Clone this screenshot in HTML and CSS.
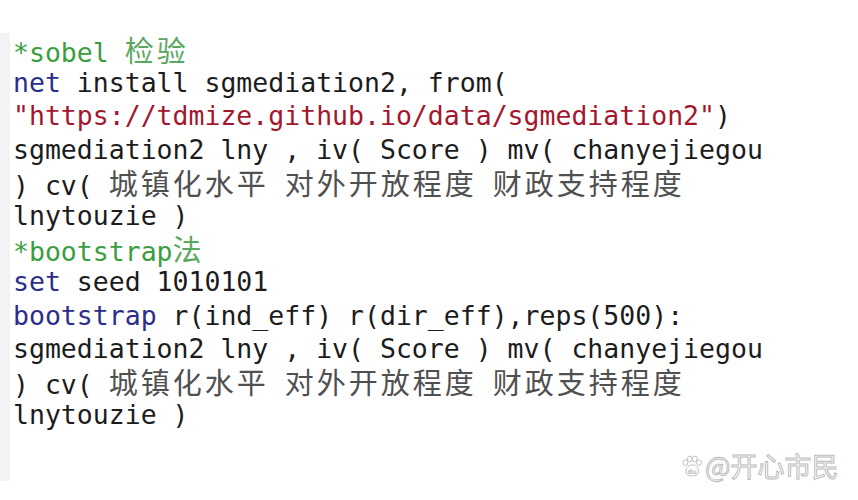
FILE: index.html
```html
<!DOCTYPE html>
<html lang="zh">
<head>
<meta charset="utf-8">
<link rel="stylesheet" href="styles.css">
</head>
<body>
<div class="page">
  <div class="editor">
    <div class="gutter"></div>
    <div class="code">
      <div class="line"><span class="cm">*sobel <span class="zh">检验</span></span></div>
      <div class="line"><span class="kw">net</span> install sgmediation2, from(</div>
      <div class="line"><span class="str">"https://tdmize.github.io/data/sgmediation2"</span>)</div>
      <div class="line">sgmediation2 lny , iv( Score ) mv( chanyejiegou</div>
      <div class="line">) cv( <span class="zh">城镇化水平</span> <span class="zh">对外开放程度</span> <span class="zh">财政支持程度</span></div>
      <div class="line">lnytouzie )</div>
      <div class="line"><span class="cm">*bootstrap<span class="zh">法</span></span></div>
      <div class="line"><span class="kw">set</span> seed 1010101</div>
      <div class="line"><span class="kw">bootstrap</span> r(ind_eff) r(dir_eff),reps(500):</div>
      <div class="line">sgmediation2 lny , iv( Score ) mv( chanyejiegou</div>
      <div class="line">) cv( <span class="zh">城镇化水平</span> <span class="zh">对外开放程度</span> <span class="zh">财政支持程度</span></div>
      <div class="line">lnytouzie )</div>
    </div>
  </div>
  <div class="watermark">
    <svg class="paw" viewBox="0 0 20 20" width="22" height="22">
      <g fill="#fff" stroke="#bdbdbd" stroke-width="0.9">
        <ellipse cx="4" cy="7" rx="2.2" ry="2.6"/>
        <ellipse cx="8" cy="3.6" rx="2.2" ry="2.6"/>
        <ellipse cx="12.6" cy="3.6" rx="2.2" ry="2.6"/>
        <ellipse cx="16.4" cy="7" rx="2.2" ry="2.6"/>
        <path d="M4.5 15.5 C4.5 11 7.5 9 10.2 9 C13 9 16 11 16 15.5 C16 18 14 19 10.2 19 C6.5 19 4.5 18 4.5 15.5 Z"/>
      </g>
      <text x="10.2" y="17" text-anchor="middle" class="du">du</text>
    </svg>
    <span class="wm-text">@开心市民</span>
  </div>
</div>
</body>
</html>
```
FILE: styles.css
```css
html, body {
  margin: 0;
  padding: 0;
  background: #ffffff;
}

.page {
  position: relative;
  width: 858px;
  height: 500px;
  overflow: hidden;
  background: #ffffff;
}

.editor {
  display: flex;
  padding-top: 33px;
}

.gutter {
  width: 10px;
  height: 448px;
  background: #f3f3f5;
  flex: none;
}

.code {
  padding-left: 3px;
  font-family: "DejaVu Sans Mono", "Liberation Mono", monospace;
  font-size: 26.5px;
  line-height: 33.2px;
  color: #1c1c1c;
}

.line {
  white-space: pre;
  height: 33.2px;
}

.cm {
  color: #3a9e3f;
}

.kw {
  color: #2b2d8c;
}

.str {
  color: #a3172e;
}

.zh {
  font-family: "Noto Sans CJK SC", sans-serif;
  font-size: 29px;
  line-height: 33.2px;
  letter-spacing: 3px;
  color: #505050;
}

.cm .zh {
  color: #5aa860;
}

.watermark {
  position: absolute;
  left: 681px;
  top: 451px;
  display: flex;
  align-items: center;
  gap: 2px;
}

.paw {
  display: block;
}

.du {
  font-family: "DejaVu Sans", sans-serif;
  font-size: 6px;
  font-weight: bold;
  fill: #bdbdbd;
}

.wm-text {
  font-family: "Noto Sans CJK SC", sans-serif;
  font-size: 27px;
  line-height: 30px;
  color: #ffffff;
  -webkit-text-stroke: 1px #bcbcbc;
}
```
